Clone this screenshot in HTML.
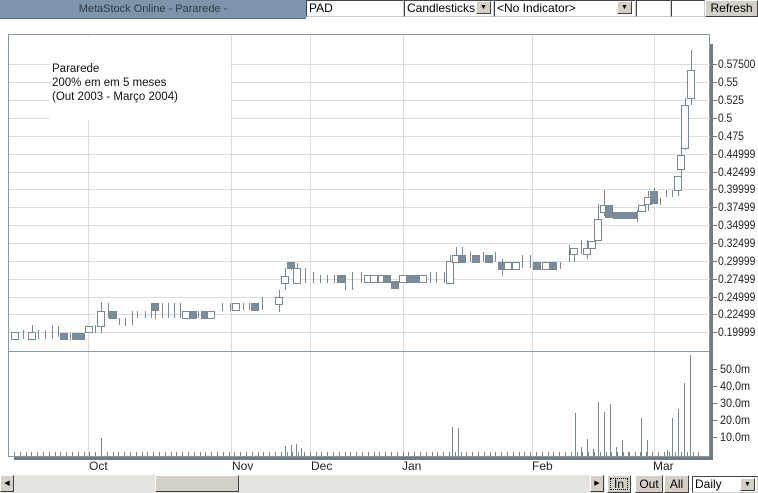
<!DOCTYPE html><html><head><meta charset="utf-8"><style>
body{margin:0;width:758px;height:493px;overflow:hidden;background:#fff;font-family:"Liberation Sans",sans-serif;position:relative}
.a{position:absolute;box-sizing:border-box}
.hdr{left:0;top:0;width:306px;height:18px;background:#7d95aa;color:#2c3a46;font-size:11px;line-height:18px;text-align:center;padding-left:0}
.in{background:#fff;border:1px solid #444;border-right-color:#ccc;border-bottom-color:#ccc;font-size:12px;line-height:15px;padding-left:2px;height:17px;top:0}
.btn{background:#d4d0c8;border:1px solid;border-color:#fff #404040 #404040 #fff;font-size:12px;text-align:center}
.dd{width:15px;height:13px;top:1px;background:#d4d0c8;border:1px solid;border-color:#fff #404040 #404040 #fff;font-size:7px;text-align:center;line-height:11px}
</style></head><body>
<div class="a hdr">MetaStock Online - Pararede -</div>
<div class="a" style="left:0;top:18px;width:306px;height:1px;background:#5a6e80"></div>
<div class="a in" style="left:306px;width:98px">PAD</div>
<div class="a in" style="left:404px;width:90px">Candlesticks</div>
<div class="a dd" style="left:476px">▼</div>
<div class="a in" style="left:494px;width:142px">&lt;No Indicator&gt;</div>
<div class="a dd" style="left:617px">▼</div>
<div class="a in" style="left:636px;width:35px"></div>
<div class="a in" style="left:671px;width:34px"></div>
<div class="a btn" style="left:705px;top:0;width:53px;height:17px;line-height:14px">Refresh</div>

<svg class="a" style="left:0;top:0" width="758" height="493" id="s">
<rect x="8.5" y="34.5" width="701" height="422" fill="#fff" stroke="#8a96a0"/>
<rect x="710" y="44" width="3" height="416" fill="#707a82"/>
<rect x="14" y="457" width="699" height="3" fill="#707a82"/>
<g id="grid" stroke="#dcdcdc" stroke-width="1"></g>
<rect x="50" y="36" width="180" height="84" fill="#fff"/>
<line x1="9" y1="351.5" x2="710" y2="351.5" stroke="#8a96a0"/>
<g id="c"></g>
<g id="v" stroke="#7a868e"></g>
<g id="lab" font-family="Liberation Sans, sans-serif" font-size="12" fill="#222"></g>
<text x="52" y="72" font-size="11.5" fill="#111">Pararede</text>
<text x="52" y="86" font-size="11.5" fill="#111">200% em em 5 meses</text>
<text x="52" y="100" font-size="11.5" fill="#111">(Out 2003 - Março 2004)</text>
</svg>

<div class="a" style="left:0;top:474px;width:605px;height:19px;background:#e6e4df;border-top:1px solid #fff"></div>
<div class="a btn" style="left:0;top:475px;width:14px;height:17px;font-size:7px;line-height:15px">◀</div>
<div class="a" style="left:155px;top:475px;width:84px;height:17px;background:#d4d0c8;border:1px solid;border-color:#fff #404040 #404040 #fff"></div>
<div class="a btn" style="left:590px;top:475px;width:14px;height:17px;font-size:7px;line-height:15px">▶</div>
<div class="a btn" style="left:607px;top:475px;width:24px;height:18px;line-height:16px;outline:1px dotted #000;outline-offset:-4px">In</div>
<div class="a btn" style="left:635px;top:475px;width:28px;height:18px;line-height:16px">Out</div>
<div class="a btn" style="left:664px;top:475px;width:25px;height:18px;line-height:16px">All</div>
<div class="a in" style="left:692px;top:476px;width:66px;height:17px">Daily</div>
<div class="a dd" style="left:740px;top:478px">▼</div>

<script>
const NS="http://www.w3.org/2000/svg";
function el(p,t,a,txt){const e=document.createElementNS(NS,t);for(const k in a)e.setAttribute(k,a[k]);if(txt)e.textContent=txt;document.getElementById(p).appendChild(e);}
const ys=[64,82,100,118,136,154,172,189,207,225,243,261,279,297,314,332];
const labs=["0.57500","0.55","0.525","0.5","0.475","0.44999","0.42499","0.39999","0.37499","0.34999","0.32499","0.29999","0.27499","0.24999","0.22499","0.19999"];
function tl(s){let w=0;for(const ch of s)w+=(ch=="."?2.6:5.8);return w;}
ys.forEach((y,i)=>{el("grid","line",{x1:9,x2:710,y1:y+.5,y2:y+.5});el("lab","line",{x1:713,x2:717,y1:y+.5,y2:y+.5,stroke:"#777"});el("lab","text",{x:718,y:y+4,textLength:tl(labs[i]),lengthAdjust:"spacingAndGlyphs"},labs[i]);});
[88,231,310,403,532,654].forEach(x=>el("grid","line",{x1:x+.5,x2:x+.5,y1:35,y2:456}));
[[369,"50.0m"],[386,"40.0m"],[403,"30.0m"],[420,"20.0m"],[437,"10.0m"]].forEach(([y,t])=>{el("lab","line",{x1:713,x2:717,y1:y+.5,y2:y+.5,stroke:"#777"});el("lab","text",{x:720,y:y+4,textLength:30,lengthAdjust:"spacingAndGlyphs"},t);});
[[97,"Oct"],[240,"Nov"],[319,"Dec"],[410,"Jan"],[540,"Feb"],[661,"Mar"]].forEach(([x,t])=>el("lab","text",{x:x-8,y:470},t));
const C=[[15,332,339,332,339,1],[23,330,339,330,339,0],[32,332,339,325,339,1],[38,330,339,330,339,0],[45,330,339,330,339,0],[52,325,339,325,339,0],[58,326,337,326,337,0],[64,333,339,333,339,2],[70,333,340,333,340,0],[76,333,339,333,339,2],[81,333,339,333,339,2],[89,326,332,326,333,1],[95,325,333,325,333,0],[101,311,326,302,333,1],[108,303,318,303,318,0],[113,311,318,311,318,2],[119,318,325,318,325,0],[125,318,326,318,326,0],[132,311,325,311,325,0],[137,311,318,311,318,0],[145,311,318,311,318,0],[151,311,318,311,318,0],[155,303,310,303,319,2],[162,303,318,303,318,0],[168,303,318,303,318,0],[174,303,318,303,318,0],[180,303,318,303,318,0],[186,311,318,311,318,1],[193,311,318,311,318,2],[198,311,318,311,318,0],[205,311,318,311,318,2],[211,311,318,311,318,1],[222,303,311,303,311,0],[230,303,311,303,311,0],[236,303,310,303,310,1],[243,303,310,303,310,0],[249,303,310,303,310,0],[255,303,310,303,310,2],[262,297,310,297,310,0],[279,297,304,290,312,1],[285,276,283,268,290,1],[291,262,268,262,270,2],[297,268,283,263,283,1],[305,268,283,268,283,0],[313,272,283,272,283,0],[320,275,283,275,283,0],[327,275,283,275,283,0],[334,275,283,275,283,0],[341,275,282,275,282,2],[345,275,290,275,290,0],[352,272,290,272,290,0],[361,272,283,272,283,0],[368,275,282,275,282,1],[374,275,282,275,282,1],[382,275,282,275,282,1],[387,275,282,275,282,2],[395,281,288,281,288,2],[403,275,282,275,282,1],[410,275,282,275,282,2],[418,275,282,275,282,2],[423,275,282,275,282,1],[430,272,283,272,283,0],[436,272,283,272,283,0],[444,272,283,272,283,0],[450,261,283,255,283,1],[456,255,262,247,262,1],[462,255,262,247,262,2],[470,252,262,252,262,0],[476,255,262,255,262,2],[483,252,262,252,262,0],[489,255,262,255,262,2],[495,252,262,252,262,0],[502,262,269,259,276,2],[508,262,269,262,269,1],[516,262,269,262,269,1],[522,255,268,255,268,0],[530,255,268,255,268,0],[537,262,269,262,269,2],[546,262,269,262,269,1],[553,262,269,262,269,2],[560,262,269,262,269,0],[569,245,262,245,262,0],[574,248,254,248,262,1],[581,240,254,240,254,0],[587,248,254,240,259,1],[592,241,248,241,248,1],[598,219,240,204,240,1],[604,205,212,190,216,1],[609,205,217,205,217,2],[617,212,218,212,218,2],[622,212,218,212,218,2],[628,212,218,212,218,2],[633,212,218,212,218,2],[637,210,222,210,222,0],[642,205,211,205,211,1],[648,197,204,191,211,1],[654,191,203,188,204,2],[660,198,205,198,205,0],[666,190,197,190,197,0],[672,190,197,190,197,0],[678,176,190,176,196,1],[681,155,169,147,176,1],[685,105,148,98,150,1],[691,70,98,50,105,1]];
C.forEach(([x,t,b,wt,wb,k])=>{
 el("c","line",{x1:x+.5,x2:x+.5,y1:wt,y2:wb,stroke:"#7a8891"});
 if(k)el("c","rect",{x:x-3.5,y:t+.5,width:7,height:Math.max(b-t,2),fill:k==2?"#7b8d9c":"#fff",stroke:"#7a8891"});
});
for(let x=14;x<700;x+=5.8)el("v","line",{x1:Math.round(x)+.5,x2:Math.round(x)+.5,y1:452,y2:456});
[[101,438],[285,446],[291,445],[296,444],[301,448],[452,427],[458,428],[575,413],[581,447],[587,439],[593,449],[598,402],[604,412],[610,404],[616,447],[622,440],[628,452],[641,418],[647,440],[667,450],[672,418],[678,409],[684,383],[690,355]].forEach(([x,y])=>el("v","line",{x1:x+.5,x2:x+.5,y1:y,y2:456}));
</script>
</body></html>
